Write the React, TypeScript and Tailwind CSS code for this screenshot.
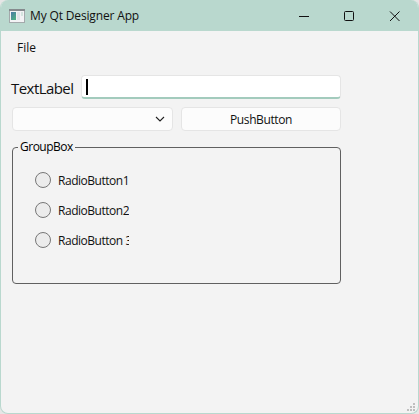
import type { ReactNode } from "react";

function AppIcon() {
  return (
    <svg width="16" height="14" viewBox="0 0 16 14" shapeRendering="crispEdges" className="shrink-0">
      <defs>
        <linearGradient id="pane" x1="0" y1="0" x2="0.7" y2="1">
          <stop offset="0" stopColor="#4b79a6" />
          <stop offset="1" stopColor="#4fae84" />
        </linearGradient>
      </defs>
      <rect width="16" height="14" fill="#a3a9ab" />
      <rect y="0" width="16" height="2" fill="#858a8d" />
      <rect x="1" y="2" width="14" height="11" fill="#f3f3f5" />
      <rect x="2" y="3" width="5" height="8" fill="url(#pane)" />
      <rect x="8" y="3" width="3" height="8" fill="#e2e4e8" />
      <rect x="12" y="3" width="2" height="4" fill="#d4e4de" />
    </svg>
  );
}

function TitleBar() {
  return (
    <header className="flex h-[31px] shrink-0 items-center bg-[#b9d8ce] pl-2">
      <AppIcon />
      <span className="ml-[5px] flex-1 whitespace-nowrap pt-px text-[12px] leading-4 tracking-[-0.15px]">My Qt Designer App</span>
      <svg width="120" height="30" viewBox="0 0 120 30" fill="none" stroke="#111" className="shrink-0">
        <path d="M1 15.5h10" />
        <rect x="46.5" y="10.5" width="9" height="9" rx="1" />
        <path d="M92 10.5l9.5 9.5M101.5 10.5l-9.5 9.5" />
      </svg>
    </header>
  );
}

function Radio({ children }: { children: ReactNode }) {
  return (
    <label className="flex h-[30px] w-[94px] items-center gap-[7px] overflow-hidden">
      <span className="size-4 shrink-0 rounded-full border border-[#777] bg-[#ececec]" />
      <span className="whitespace-nowrap pt-[2px] text-[12px] leading-4 tracking-[-0.47px]">{children}</span>
    </label>
  );
}

export default function App() {
  return (
    <div className="h-[414px] w-[419px] bg-[#e6e6e6] font-['Open_Sans','Noto_Sans',sans-serif] text-[#111]">
      <div className="flex h-full flex-col overflow-hidden rounded-lg border border-t-0 border-[#b9d8ce] bg-[#f3f3f3]">
        <TitleBar />
        <nav className="flex h-8 shrink-0 items-center pl-4 pt-[2px] text-[12px]">File</nav>
        <main className="flex flex-1 flex-col pl-[11px] pt-3">
          <div className="flex h-6 w-[329px] items-center">
            <span className="-ml-px w-[70px] whitespace-nowrap pt-[2px] text-[15px] tracking-[-0.55px]">TextLabel</span>
            <div className="flex h-6 flex-1 items-start rounded border border-b-2 border-[#e5e5e5] border-b-[#a3cbbd] bg-white pl-1 pt-[3px]">
              <span className="h-4 w-0.5 bg-black" />
            </div>
          </div>
          <div className="mt-2 flex w-[329px] gap-2">
            <div className="flex h-6 w-[161px] items-center justify-end rounded border border-[#e5e5e5] bg-[#fcfcfc] pr-[7px]">
              <svg width="10" height="6" viewBox="0 0 10 6" fill="none" stroke="#222" strokeWidth="1.1">
                <path d="M1 1l4 4 4-4" />
              </svg>
            </div>
            <button className="h-6 flex-1 rounded border border-[#e5e5e5] bg-[#fcfcfc] pt-[2px] text-[12px] leading-4 tracking-[-0.4px]">PushButton</button>
          </div>
          <fieldset className="mt-[7px] h-[146px] w-[329px] rounded border border-[#606060] pl-[22px]">
            <legend className="-ml-[17px] h-[18px] px-[2px] text-[12px] leading-[18px] tracking-[-0.5px] text-black">GroupBox</legend>
            <div className="pt-[9px]">
              <Radio>RadioButton1</Radio>
              <Radio>RadioButton2</Radio>
              <Radio>RadioButton 3</Radio>
            </div>
          </fieldset>
        </main>
        <footer className="flex shrink-0 justify-end pb-[2px] pr-[3px]">
          <svg width="8" height="8" viewBox="0 0 8 8" fill="#bfbfbf" shapeRendering="crispEdges">
            <path d="M6 0h2v2H6zM3 3h2v2H3zM6 3h2v2H6zM0 6h2v2H0zM3 6h2v2H3zM6 6h2v2H6z" />
          </svg>
        </footer>
      </div>
    </div>
  );
}
